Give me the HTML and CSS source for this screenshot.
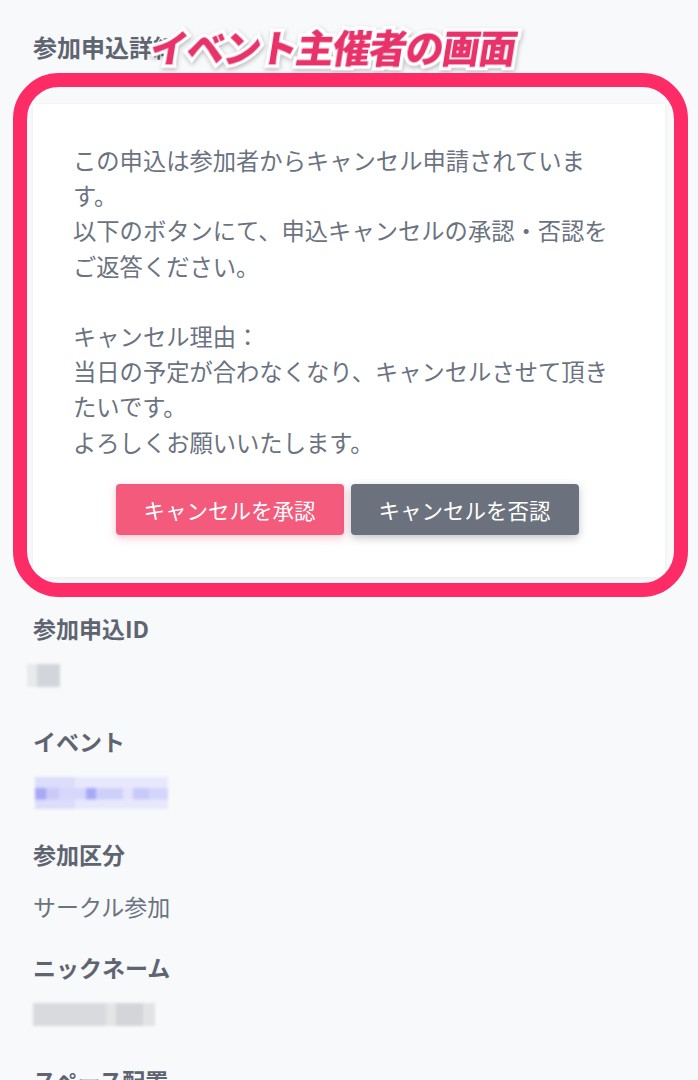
FILE: index.html
```html
<!DOCTYPE html>
<html lang="ja">
<head>
  <meta charset="UTF-8">
  <meta name="viewport" content="width=device-width, initial-scale=1.0">
  <title>参加申込詳細</title>
  <link rel="stylesheet" href="styles.css">
</head>
<body>
  <div class="page">
    <div class="title-row">
      <h1 class="page-title">参加申込詳細</h1>
      <span class="callout-label">イベント主催者の画面</span>
    </div>

    <!-- キャンセル申請の通知 -->
    <div class="notice-wrap">
      <div class="notice">
        <p class="notice-text">この申込は参加者からキャンセル申請されています。<br>以下のボタンにて、申込キャンセルの承認・否認をご返答ください。<br><br>キャンセル理由：<br>当日の予定が合わなくなり、キャンセルさせて頂きたいです。<br>よろしくお願いいたします。</p>
        <div class="notice-actions">
          <button class="btn btn-approve">キャンセルを承認</button>
          <button class="btn btn-reject">キャンセルを否認</button>
        </div>
      </div>
      <div class="callout-frame"></div>
    </div>

    <dl class="details">
      <dt>参加申込ID</dt>
      <dd><span class="masked masked-id"></span></dd>
      <dt>イベント</dt>
      <dd><span class="masked masked-event"></span></dd>
      <dt>参加区分</dt>
      <dd>サークル参加</dd>
      <dt>ニックネーム</dt>
      <dd><span class="masked masked-name"></span></dd>
      <dt>スペース配置</dt>
      <dd></dd>
    </dl>
  </div>
</body>
</html>
```

FILE: styles.css
```css
body {
  margin: 0;
  background-color: #f8f9fb;
  color: #6b7280;
  font-family: "Noto Sans CJK JP", "Noto Sans", sans-serif;
}
.page {
  padding: 31px 33px 0;
}
.title-row {
  position: relative;
  margin-bottom: 41px;
}
.page-title {
  margin: 0;
  font-size: 24px;
  line-height: 32px;
  font-weight: 700;
  color: #5f6570;
}
.callout-label {
  position: absolute;
  left: 118px;
  top: -12px;
  font-size: 38px;
  line-height: 54px;
  font-weight: 900;
  letter-spacing: -1.5px;
  color: #e8326a;
  -webkit-text-stroke: 7px #ffffff;
  paint-order: stroke fill;
  transform: skewX(-9deg);
  filter: drop-shadow(1px 2px 2px rgba(0, 0, 0, 0.25));
  white-space: nowrap;
}

/* 通知カード */
.notice-wrap {
  position: relative;
}
.notice {
  background-color: #ffffff;
  padding: 39px 44px 42px 40px;
  box-shadow: 0 1px 4px rgba(0, 0, 0, 0.06);
}
.notice-text {
  margin: 0;
  font-size: 23.3px;
  line-height: 35.2px;
  color: #6b7280;
}
.notice-actions {
  display: flex;
  justify-content: center;
  gap: 7px;
  margin-top: 24px;
}
.btn {
  border: none;
  border-radius: 4px;
  width: 228px;
  height: 51px;
  font-family: inherit;
  font-size: 21.5px;
  color: #ffffff;
  cursor: pointer;
}
.btn-approve {
  background-color: #f45a7b;
  box-shadow: 0 3px 8px rgba(244, 90, 123, 0.35);
}
.btn-reject {
  background-color: #6b727d;
  box-shadow: 0 3px 8px rgba(60, 66, 80, 0.3);
}
.callout-frame {
  position: absolute;
  top: -31px;
  left: -20px;
  right: -23px;
  bottom: -20px;
  border: 14px solid #fe2c66;
  border-radius: 46px;
  pointer-events: none;
}

/* 申込情報 */
.details {
  margin: 35px 0 0;
}
.details dt {
  font-size: 23px;
  line-height: 32px;
  font-weight: 700;
  color: #5f6570;
  margin-bottom: 20px;
}
.details dd {
  margin: 0 0 29px;
  min-height: 32px;
  font-size: 23px;
  line-height: 32px;
  color: #6b7280;
}
.masked {
  display: block;
  filter: blur(1.5px);
}
.masked-id {
  width: 33px;
  height: 23px;
  margin: 4px 0 0 -6px;
  background: linear-gradient(90deg, #e9eaec 0 30%, #d2d5d9 30% 100%);
}
.masked-event {
  width: 133px;
  height: 32px;
  margin: 0 0 0 2px;
  background:
    linear-gradient(90deg, #a6a7f5 0 8%, #c9caf9 8% 18%, #d6d7fb 18% 38%, #a8a9f6 38% 46%, #cfd0fa 46% 66%, #e3e3fc 66% 74%, #c8c9f8 74% 86%, #d4d5fa 86% 100%),
    linear-gradient(90deg, #dcdcfb 0 30%, #e8e8fc 30% 100%);
  background-size: 100% 36%, 100% 100%;
  background-position: 0 55%, 0 0;
  background-repeat: no-repeat;
}
.masked-name {
  width: 122px;
  height: 23px;
  margin: 4px 0 0 0;
  background: linear-gradient(90deg, #d8dadd 0 60%, #e4e5e7 60% 68%, #d3d5d8 68% 90%, #e2e3e5 90% 100%);
}
```
